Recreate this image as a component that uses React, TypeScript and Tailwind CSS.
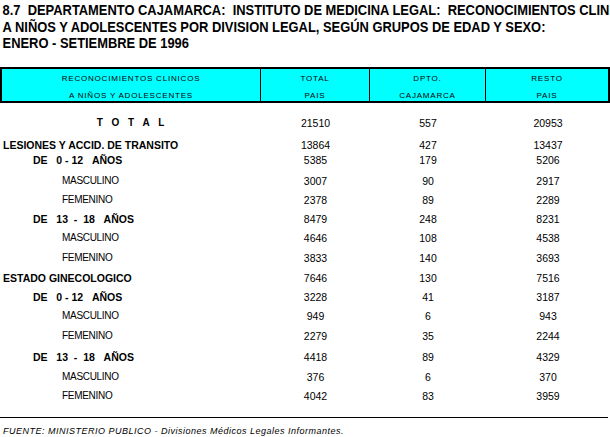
import React from "react";

type Row = {
  label: string;
  kind: "total" | "group" | "age" | "sex";
  v: [string, string, string];
  h: number;
};

const rows: Row[] = [
  { label: "T O T A L", kind: "total", v: ["21510", "557", "20953"], h: 22 },
  { label: "LESIONES Y ACCID. DE TRANSITO", kind: "group", v: ["13864", "427", "13437"], h: 15 },
  { label: "DE\u00a0\u00a0\u00a00 - 12\u00a0\u00a0\u00a0AÑOS", kind: "age", v: ["5385", "179", "5206"], h: 21 },
  { label: "MASCULINO", kind: "sex", v: ["3007", "90", "2917"], h: 19 },
  { label: "FEMENINO", kind: "sex", v: ["2378", "89", "2289"], h: 19 },
  { label: "DE\u00a0\u00a0\u00a013\u00a0\u00a0-\u00a0\u00a018\u00a0\u00a0\u00a0AÑOS", kind: "age", v: ["8479", "248", "8231"], h: 19 },
  { label: "MASCULINO", kind: "sex", v: ["4646", "108", "4538"], h: 20 },
  { label: "FEMENINO", kind: "sex", v: ["3833", "140", "3693"], h: 20 },
  { label: "ESTADO GINECOLOGICO", kind: "group", v: ["7646", "130", "7516"], h: 19 },
  { label: "DE\u00a0\u00a0\u00a00 - 12\u00a0\u00a0\u00a0AÑOS", kind: "age", v: ["3228", "41", "3187"], h: 19 },
  { label: "MASCULINO", kind: "sex", v: ["949", "6", "943"], h: 20 },
  { label: "FEMENINO", kind: "sex", v: ["2279", "35", "2244"], h: 21 },
  { label: "DE\u00a0\u00a0\u00a013\u00a0\u00a0-\u00a0\u00a018\u00a0\u00a0\u00a0AÑOS", kind: "age", v: ["4418", "89", "4329"], h: 20 },
  { label: "MASCULINO", kind: "sex", v: ["376", "6", "370"], h: 19 },
  { label: "FEMENINO", kind: "sex", v: ["4042", "83", "3959"], h: 14 },
];

function Label({ r }: { r: Row }) {
  if (r.kind === "total")
    return (
      <div className="w-[261px] text-center font-bold text-[10px] tracking-[3px] pl-[3px]">
        {r.label}
      </div>
    );
  if (r.kind === "group")
    return <div className="w-[261px] pl-[3px] font-bold text-[10.5px]">{r.label}</div>;
  if (r.kind === "age")
    return <div className="w-[261px] pl-[33px] font-bold text-[10.5px]">{r.label}</div>;
  return <div className="w-[261px] pl-[62px] text-[10px] tracking-[-0.3px]">{r.label}</div>;
}

export default function App() {
  return (
    <div
      className="w-[610px] h-[437px] bg-white text-black overflow-hidden"
      style={{ fontFamily: '"Liberation Sans", Arial, sans-serif' }}
    >
      <div className="w-[610px] overflow-hidden pt-[2px]">
        <div className="pl-[3px] font-bold text-[15px] leading-[16.5px] whitespace-nowrap origin-left scale-x-[0.86] w-[700px]">
          <div>8.7&nbsp; DEPARTAMENTO CAJAMARCA:&nbsp; INSTITUTO DE MEDICINA LEGAL:&nbsp; RECONOCIMIENTOS CLINICOS</div>
          <div>A NIÑOS Y ADOLESCENTES POR DIVISION LEGAL, SEGÚN GRUPOS DE EDAD Y SEXO:</div>
          <div>ENERO - SETIEMBRE DE 1996</div>
        </div>
      </div>

      <div className="mt-[15px] h-[36px] flex border-[2px] border-black bg-[#00ffff] text-[8px] tracking-[0.8px] leading-[17px]">
        <div className="w-[259px] border-r border-black text-center pt-[1px]">
          <div>RECONOCIMIENTOS CLINICOS</div>
          <div>A NIÑOS Y ADOLESCENTES</div>
        </div>
        <div className="w-[109px] border-r border-black text-center pt-[1px]">
          <div>TOTAL</div>
          <div>PAIS</div>
        </div>
        <div className="w-[116px] border-r border-black text-center pt-[1px]">
          <div>DPTO.</div>
          <div>CAJAMARCA</div>
        </div>
        <div className="flex-1 text-center pt-[1px]">
          <div>RESTO</div>
          <div>PAIS</div>
        </div>
      </div>

      <div className="mt-[13px]">
        {rows.map((r, i) => (
          <div key={i} className="flex items-start leading-[14px]" style={{ height: r.h }}>
            <Label r={r} />
            <div className="w-[109px] text-center text-[10.5px]">{r.v[0]}</div>
            <div className="w-[116px] text-center text-[10.5px]">{r.v[1]}</div>
            <div className="flex-1 text-center text-[10.5px]">{r.v[2]}</div>
          </div>
        ))}
      </div>

      <div className="mt-[14px] h-px bg-black w-[608px]" />
      <div className="mt-[7px] pl-[3px] italic text-[9px] tracking-[0.5px] leading-[12px] whitespace-nowrap">
        FUENTE: MINISTERIO PUBLICO - Divisiones Médicos Legales Informantes.
      </div>
    </div>
  );
}
